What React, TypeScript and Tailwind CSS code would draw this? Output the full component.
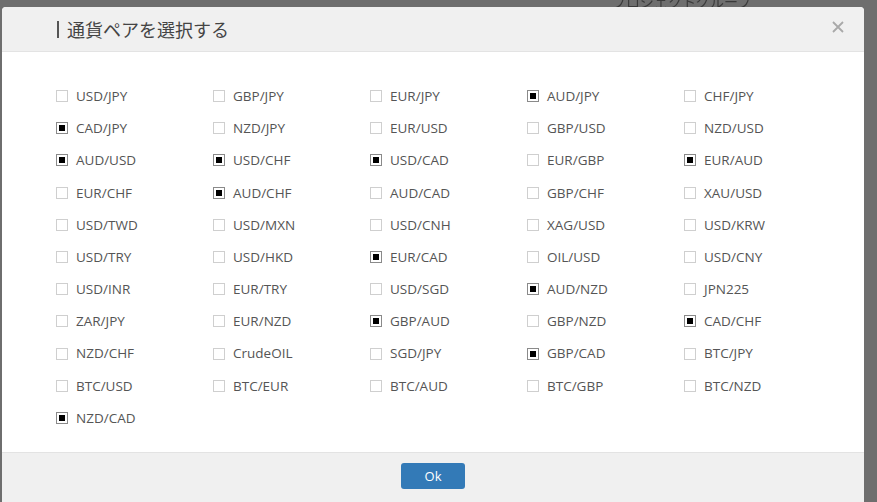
import React from 'react';

type Pair = { name: string; checked: boolean };

const rows: [string, boolean][][] = [
  [['USD/JPY', false], ['GBP/JPY', false], ['EUR/JPY', false], ['AUD/JPY', true], ['CHF/JPY', false]],
  [['CAD/JPY', true], ['NZD/JPY', false], ['EUR/USD', false], ['GBP/USD', false], ['NZD/USD', false]],
  [['AUD/USD', true], ['USD/CHF', true], ['USD/CAD', true], ['EUR/GBP', false], ['EUR/AUD', true]],
  [['EUR/CHF', false], ['AUD/CHF', true], ['AUD/CAD', false], ['GBP/CHF', false], ['XAU/USD', false]],
  [['USD/TWD', false], ['USD/MXN', false], ['USD/CNH', false], ['XAG/USD', false], ['USD/KRW', false]],
  [['USD/TRY', false], ['USD/HKD', false], ['EUR/CAD', true], ['OIL/USD', false], ['USD/CNY', false]],
  [['USD/INR', false], ['EUR/TRY', false], ['USD/SGD', false], ['AUD/NZD', true], ['JPN225', false]],
  [['ZAR/JPY', false], ['EUR/NZD', false], ['GBP/AUD', true], ['GBP/NZD', false], ['CAD/CHF', true]],
  [['NZD/CHF', false], ['CrudeOIL', false], ['SGD/JPY', false], ['GBP/CAD', true], ['BTC/JPY', false]],
  [['BTC/USD', false], ['BTC/EUR', false], ['BTC/AUD', false], ['BTC/GBP', false], ['BTC/NZD', false]],
  [['NZD/CAD', true]],
];

const pairs: Pair[] = rows.flat().map(([name, checked]) => ({ name, checked }));

const PairOption: React.FC<{ pair: Pair }> = ({ pair }) => (
  <label className="flex items-center h-[32.2px] cursor-pointer">
    <span
      className={
        pair.checked
          ? 'w-[12px] h-[12px] border border-[#8a8a8a] bg-white flex items-center justify-center'
          : 'w-[12px] h-[12px] border border-[#cfcfcf] bg-white flex items-center justify-center'
      }
    >
      {pair.checked && <span className="w-[6px] h-[6px] bg-black" />}
    </span>
    <span className="ml-[8px] text-[13.5px] text-[#555]">{pair.name}</span>
  </label>
);

export default function App() {
  return (
    <div
      className="relative w-[877px] h-[502px] overflow-hidden bg-[#6e6e6e] pt-[7px] pl-[2px]"
      style={{ fontFamily: '"Open Sans", "Noto Sans CJK JP", sans-serif' }}
    >
      {/* page content behind the overlay */}
      <div className="absolute top-[-9px] left-[612px] text-[14px] text-[#3a3a3a] blur-[0.6px]">
        プロジェクトグループ
      </div>

      <div className="relative w-[862px] h-[520px] bg-white rounded-t-[4px] flex flex-col">
        <div className="h-[45px] bg-[#f0f0f0] border-b border-[#e3e3e3] rounded-t-[4px] flex items-center justify-between pl-[55px] pr-[20px]">
          <div className="flex items-center">
            <span className="w-[2px] h-[17px] bg-[#555]" />
            <span
              className="ml-[8px] text-[18px] text-[#444]"
              style={{ fontFamily: '"Noto Sans CJK JP", sans-serif' }}
            >
              通貨ペアを選択する
            </span>
          </div>
          <svg width="12" height="12" viewBox="0 0 12 12" className="mt-[-4px]">
            <path d="M1 1 L11 11 M11 1 L1 11" stroke="#a9a9a9" strokeWidth="1.8" />
          </svg>
        </div>

        <div className="pt-[28px] pb-[18px] pl-[54px]">
          <div className="grid grid-cols-[repeat(5,157px)]">
            {pairs.map((p) => (
              <PairOption key={p.name} pair={p} />
            ))}
          </div>
        </div>

        <div className="flex-1 bg-[#f0f0f0] border-t border-[#e3e3e3] flex justify-center pt-[10px]">
          <button className="w-[64px] h-[26px] rounded-[3px] bg-[#337ab7] text-white text-[13px] leading-none">
            Ok
          </button>
        </div>
      </div>
    </div>
  );
}
